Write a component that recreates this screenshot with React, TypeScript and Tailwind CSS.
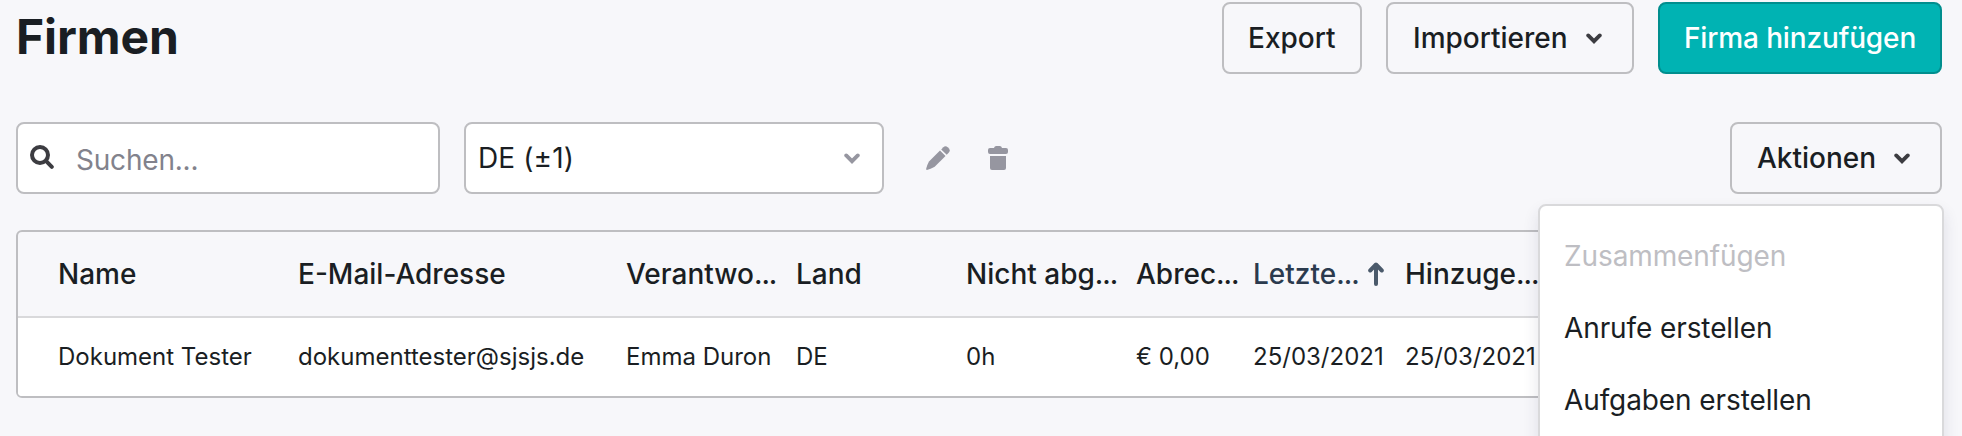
import type { ReactNode } from "react";

const columns = [
  { label: "Name", value: "Dokument Tester", width: "w-[240px]" },
  { label: "E-Mail-Adresse", value: "dokumenttester@sjsjs.de", width: "w-[328px]" },
  { label: "Verantwo", value: "Emma Duron", width: "w-[170px]", cut: true },
  { label: "Land", value: "DE", width: "w-[170px]" },
  { label: "Nicht abg", value: "0h", width: "w-[170px]", cut: true },
  { label: "Abrec", value: "€ 0,00", width: "w-[117px]", cut: true },
  { label: "Letzte", value: "25/03/2021", width: "w-[152px]", cut: true, sorted: true },
  { label: "Hinzuge", value: "25/03/2021", width: "w-[152px]", cut: true },
];

const actions = [
  { label: "Zusammenfügen", disabled: true },
  { label: "Anrufe erstellen" },
  { label: "Aufgaben erstellen" },
];

function Chevron({ className }: { className: string }) {
  return (
    <svg viewBox="0 0 16 11" className={`shrink-0 ${className}`} fill="none" stroke="currentColor">
      <path d="M2.2 2.4 8 8.2l5.8-5.8" strokeWidth="3.8" strokeLinecap="round" />
    </svg>
  );
}

function Button({ children, className }: { children: ReactNode; className: string }) {
  return (
    <button
      className={`flex h-[72px] items-center rounded-lg border-2 text-[28px] font-medium whitespace-nowrap ${className}`}
    >
      {children}
    </button>
  );
}

export default function App() {
  return (
    <div className="relative h-[436px] w-[1962px] overflow-hidden bg-[#f7f7fa] pt-0.5 pr-5 pl-4 font-['Inter',sans-serif] text-[#1a1e23]">
      <header className="flex h-[72px] justify-between">
        <h1 className="text-[48px] leading-[70px] font-bold tracking-[-0.1px]">Firmen</h1>
        <div className="flex gap-6">
          <Button className="w-[140px] border-[#bebec1] pl-6">Export</Button>
          <Button className="w-[248px] border-[#bebec1] pl-[25px]">
            Importieren
            <Chevron className="ml-[18px] h-[11px] w-4 text-[#3c3c41]" />
          </Button>
          <Button className="w-[284px] border-[#008e8e] bg-[#00b3b3] pl-6 tracking-[-0.14px] text-white">
            Firma hinzufügen
          </Button>
        </div>
      </header>

      <div className="mt-12 flex h-[72px]">
        <div className="flex w-[424px] items-center rounded-lg border-2 border-[#bebec1] bg-white pl-3">
          <svg viewBox="0 0 24 24" className="mb-0.5 size-6" fill="none" stroke="#3c3c41">
            <circle cx="10" cy="10" r="8" strokeWidth="4" />
            <path d="m16.2 16.2 5.6 5.6" strokeWidth="4" strokeLinecap="round" />
          </svg>
          <span className="mt-1 ml-[22px] text-[28px] tracking-[-0.2px] text-[#82828c]">
            Suchen...
          </span>
        </div>
        <div className="ml-6 flex w-[420px] items-center justify-between rounded-lg border-2 border-[#bebec1] bg-white pr-[22px] pl-3">
          <span className="text-[28px] tracking-[0.1px]">DE (±1)</span>
          <Chevron className="h-[11px] w-4 text-[#9696a0]" />
        </div>
        <div className="ml-[42px] flex items-center gap-[38px] text-[#9696a0]">
          <svg viewBox="0 0 24 24" className="size-6" fill="currentColor">
            <path d="M14 4.5 19.5 10 8.7 20.7Q4.5 23 .9 23.9q-.8.1-.8-.8Q.8 19.3 3 15.5Z" />
            <path d="m15.2 3.4 2.1-2.1q2.2-2 4.4 0l1 1q2.1 2.3 0 4.5l-2 2Z" />
          </svg>
          <svg viewBox="0 0 20 24" className="h-6 w-5" fill="currentColor">
            <path d="M2 2h4q.5-2 2.2-2h3.600Q13.500 0 14 2h4q2 0 2 2v2q0 2-2 2H2Q0 8 0 6V4q0-2 2-2Z" />
            <path d="M2 10h16v12q0 2-2 2H4q-2 0-2-2Z" />
          </svg>
        </div>
        <Button className="ml-auto w-[212px] border-[#bebec1] pl-[25px]">
          Aktionen
          <Chevron className="ml-[18px] h-[11px] w-4 text-[#3c3c41]" />
        </Button>
      </div>

      <div className="mt-9 h-[168px] overflow-hidden rounded-md border-2 border-[#bebec1]">
        <div className="flex h-[86px] items-center border-b-2 border-[#d9d9db] pl-10 text-[28px] font-medium">
          {columns.map((col) => (
            <div
              key={col.label}
              className={`flex shrink-0 items-center whitespace-nowrap ${col.width} ${
                col.sorted ? "text-[#2b3a4e]" : ""
              }`}
            >
              {col.label}
              {col.cut && <span className="tracking-[-1px]">...</span>}
              {col.sorted && (
                <svg
                  viewBox="0 0 16 24"
                  className="ml-[9px] h-6 w-4 shrink-0"
                  fill="none"
                  stroke="#4b5a6b"
                  strokeWidth="4"
                  strokeLinecap="round"
                  strokeLinejoin="round"
                >
                  <path d="M8 22V3M2.200 8.500 8 2.500l5.800 6" />
                </svg>
              )}
            </div>
          ))}
        </div>
        <div className="flex h-[78px] items-center bg-white pl-10 text-[24px]">
          {columns.map((col) => (
            <div key={col.label} className={`shrink-0 whitespace-nowrap ${col.width}`}>
              {col.value}
            </div>
          ))}
        </div>
      </div>

      <ul className="absolute top-[204px] left-[1538px] h-[300px] w-[406px] rounded-lg border-2 border-[#d9d9db] bg-white pt-[14px] shadow-[0_8px_16px_rgba(40,40,80,0.12)]">
        {actions.map((action) => (
          <li
            key={action.label}
            className={`flex h-[72px] items-center pl-6 text-[28px] tracking-[-0.1px] ${
              action.disabled ? "text-[#bebec3]" : ""
            }`}
          >
            {action.label}
          </li>
        ))}
      </ul>
    </div>
  );
}
